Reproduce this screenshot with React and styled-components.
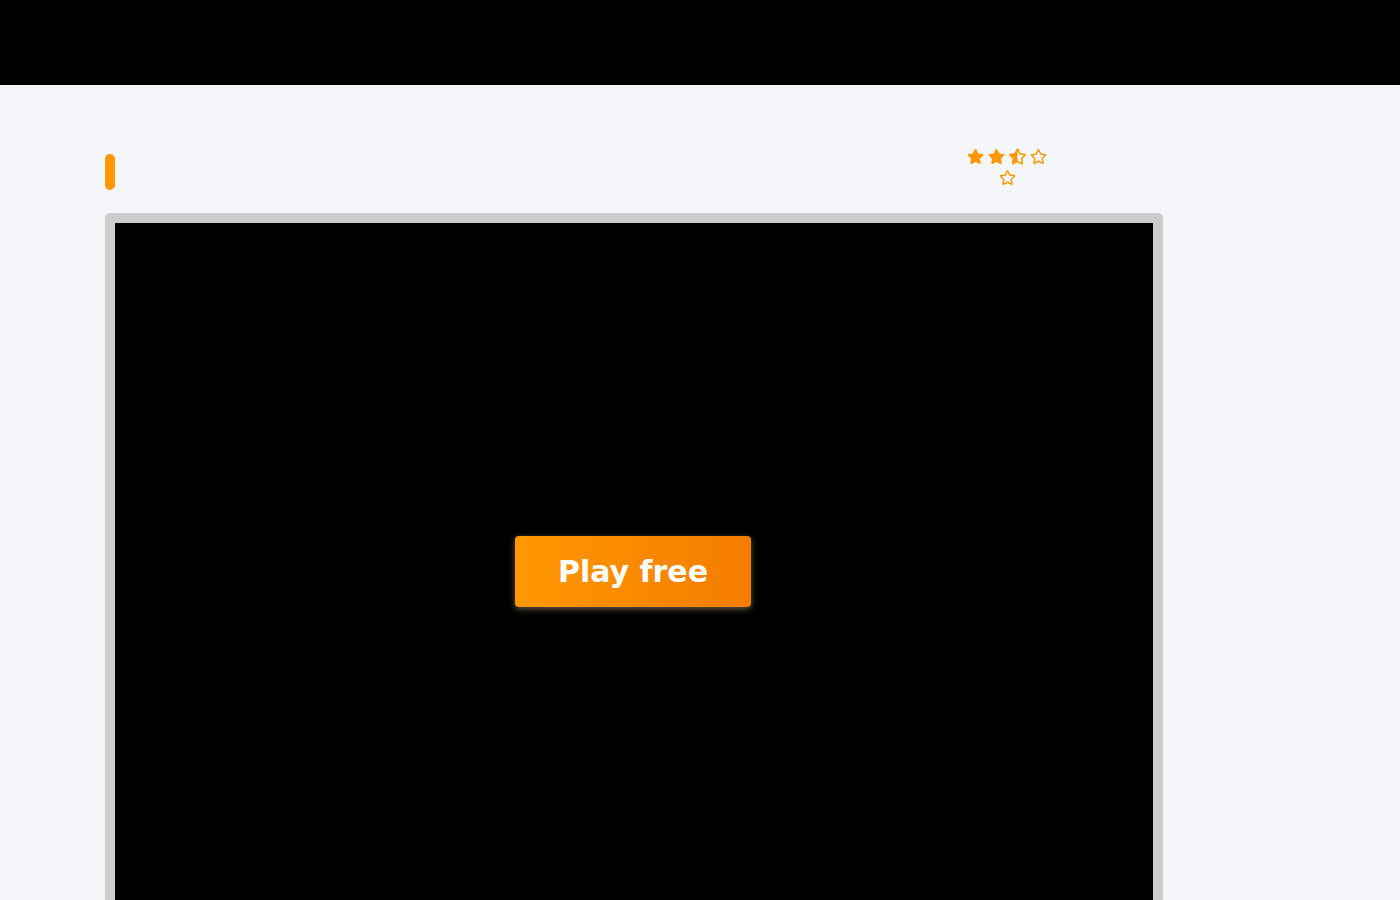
import styled, { createGlobalStyle } from "styled-components"
import { FaStar, FaStarHalfAlt, FaRegStar } from "react-icons/fa"

const Global = createGlobalStyle`
body{
margin:0;
background:#f5f6fa;
font-family:"DejaVu Sans", sans-serif;
}
`

const Header = styled.header`
height:85px;
background:#000;
`

const Main = styled.main`
padding:63px 0 0 105px;
width:1058px;
`

const TitleRow = styled.div`
display:flex;
justify-content:space-between;
align-items:flex-start;
height:65px;
padding-right:114px;
`

const Accent = styled.span`
display:block;
width:10px;
height:36px;
margin-top:6px;
border-radius:5px;
background:#ff9800;
`

const Rating = styled.div`
width:84px;
display:flex;
flex-wrap:wrap;
justify-content:center;
gap:4px 4px;
color:#ff9800;
font-size:17px;
line-height:0;
`

const Frame = styled.div`
border:10px solid #cccccc;
border-radius:5px;
background:#000;
height:697px;
display:flex;
align-items:center;
justify-content:center;
`

const PlayButton = styled.button`
width:236px;
height:71px;
margin-right:2px;
border:none;
border-radius:4px;
background:linear-gradient(90deg,#ff9800,#f57c00);
color:#fff;
font-family:"DejaVu Sans", sans-serif;
font-weight:bold;
font-size:30px;
box-shadow:0 2px 6px rgba(200,180,150,0.5);
cursor:pointer;
`

function App() {
    return(
        <>
            <Global/>
            <Header/>
            <Main>
                <TitleRow>
                    <Accent/>
                    <Rating>
                        <FaStar/><FaStar/><FaStarHalfAlt/><FaRegStar/><FaRegStar/>
                    </Rating>
                </TitleRow>
                <Frame>
                    <PlayButton>Play free</PlayButton>
                </Frame>
            </Main>
        </>
    )
}

export default App
